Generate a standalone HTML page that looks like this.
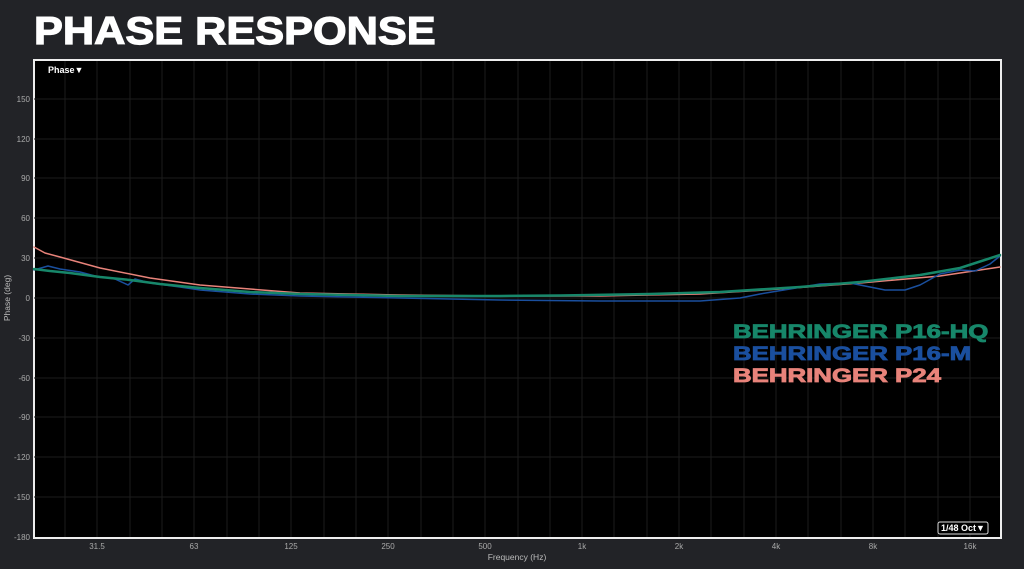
<!DOCTYPE html>
<html><head><meta charset="utf-8"><style>
html,body{margin:0;padding:0;background:#222327;width:1024px;height:569px;overflow:hidden;font-family:"Liberation Sans",sans-serif}
</style></head><body>
<svg width="1024" height="569" xmlns="http://www.w3.org/2000/svg" style="position:absolute;left:0;top:0">
<rect width="1024" height="569" fill="#222327"/>
<text x="34" y="44" font-family="Liberation Sans" font-weight="bold" font-size="39" fill="#fff" transform="translate(34 0) scale(1.11 1) translate(-34 0)" stroke="#fff" stroke-width="1.2">PHASE RESPONSE</text>
<rect x="34" y="60" width="967" height="478" fill="#000" stroke="#eee" stroke-width="2"/>
<g stroke="#1c1c1c" stroke-width="1">
<path d="M34 99H1000M34 139H1000M34 178H1000M34 218H1000M34 258H1000M34 298H1000M34 338H1000M34 378H1000M34 417H1000M34 457H1000M34 497H1000"/>
<path d="M65 61V537M97 61V537M130 61V537M162 61V537M194 61V537M227 61V537M259 61V537M291 61V537M324 61V537M356 61V537M388 61V537M421 61V537M453 61V537M485 61V537M518 61V537M550 61V537M582 61V537M614 61V537M647 61V537M679 61V537M711 61V537M744 61V537M776 61V537M808 61V537M841 61V537M873 61V537M905 61V537M938 61V537M970 61V537"/>
</g>
<text x="48" y="73" font-size="9" font-weight="bold" fill="#fff">Phase▼</text>
<g font-size="8" fill="#aaa" text-anchor="end">
<text x="30" y="102">150</text><text x="30" y="142">120</text><text x="30" y="181">90</text><text x="30" y="221">60</text><text x="30" y="261">30</text><text x="30" y="301">0</text><text x="30" y="341">-30</text><text x="30" y="381">-60</text><text x="30" y="420">-90</text><text x="30" y="460">-120</text><text x="30" y="500">-150</text><text x="30" y="540">-180</text>
</g>
<g font-size="8" fill="#aaa" text-anchor="middle">
<text x="97" y="549">31.5</text><text x="194" y="549">63</text><text x="291" y="549">125</text><text x="388" y="549">250</text><text x="485" y="549">500</text><text x="582" y="549">1k</text><text x="679" y="549">2k</text><text x="776" y="549">4k</text><text x="873" y="549">8k</text><text x="970" y="549">16k</text>
</g>
<text x="517" y="560" font-size="8.5" fill="#bbb" text-anchor="middle">Frequency (Hz)</text>
<text transform="translate(10 298) rotate(-90)" font-size="8.5" fill="#bbb" text-anchor="middle">Phase (deg)</text>
<rect x="938" y="522" width="50" height="12" rx="2" fill="#000" stroke="#ddd" stroke-width="1"/>
<text x="941" y="531" font-size="9" font-weight="bold" fill="#fff">1/48 Oct▼</text>
<g fill="none" stroke-linejoin="round" stroke-linecap="round">
<path stroke="#e8837a" stroke-width="1.5" d="M34 247L45 253L60 257L100 268L150 278L200 285L250 289L300 293L400 295L500 296L600 296L700 294L780 289L860 283L940 276L1000 267"/>
<path stroke="#1a4f9e" stroke-width="1.5" d="M34 270L48 266L60 269L80 272L95 276L115 279L128 285L135 279L150 283L180 287L200 290L250 294L300 296L400 298L500 300L600 301L700 301L740 298L760 294L790 289L820 284L850 283L870 287L885 290L905 290L920 285L940 274L960 270L975 271L990 264L1000 256"/>
<path stroke="#17876a" stroke-width="2.5" d="M34 269L50 271L70 273L100 277L130 280L160 284L200 288L250 292L300 294L400 296L500 296L560 295.5L650 294L720 292L800 287L860 282L920 275L960 268L1000 255"/>
</g>
<g font-family="Liberation Sans" font-weight="bold" font-size="19" stroke-width="0.8">
<text x="733" y="338" fill="#17876a" stroke="#17876a" transform="translate(733 0) scale(1.36 1) translate(-733 0)">BEHRINGER P16-HQ</text>
<text x="733" y="360" fill="#1a4f9e" stroke="#1a4f9e" transform="translate(733 0) scale(1.36 1) translate(-733 0)">BEHRINGER P16-M</text>
<text x="733" y="382" fill="#e8837a" stroke="#e8837a" transform="translate(733 0) scale(1.36 1) translate(-733 0)">BEHRINGER P24</text>
</g>
</svg>
</body></html>
